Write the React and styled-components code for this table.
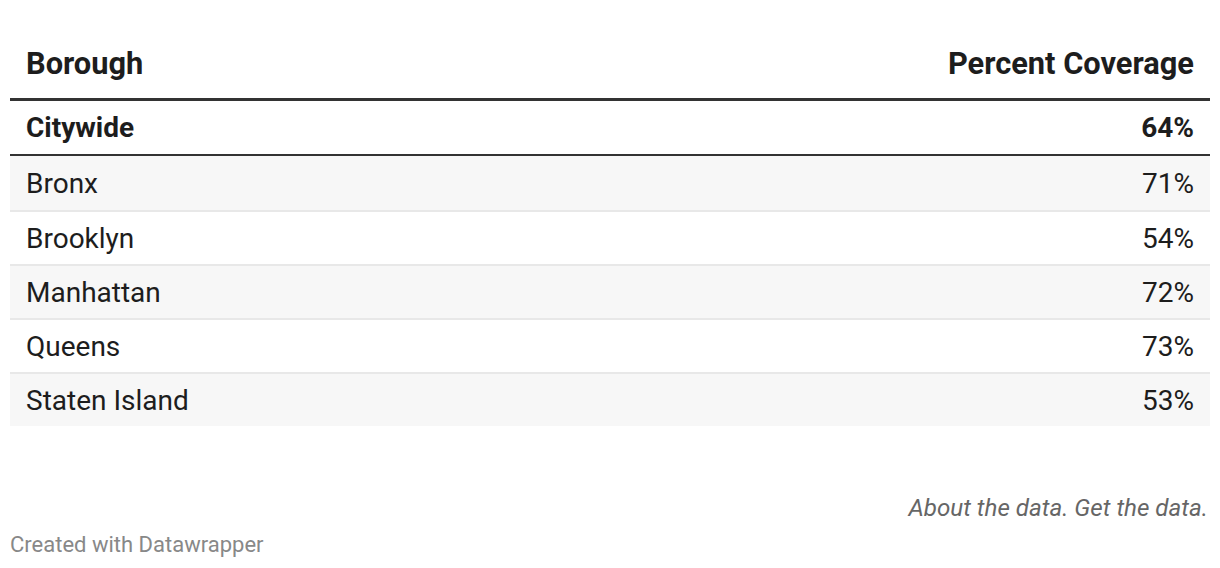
import React from 'react'
import styled, { createGlobalStyle } from 'styled-components';

const GlobalStyle = createGlobalStyle`
  html, body {
    margin: 0;
    padding: 0;
    background: #fff;
  }
  body {
    font-family: Roboto, "Liberation Sans", sans-serif;
    color: #1d1d1d;
  }
`

const rows = [
  { name: "Bronx", value: "71%" },
  { name: "Brooklyn", value: "54%" },
  { name: "Manhattan", value: "72%" },
  { name: "Queens", value: "73%" },
  { name: "Staten Island", value: "53%" },
]

const Wrapper = styled.div`
  width: 1220px;
  padding: 0 10px;
  box-sizing: border-box;
`

const Table = styled.div`
  display: flex;
  flex-direction: column;
  padding-top: 28px;
`

const Row = styled.div`
  display: flex;
  justify-content: space-between;
  align-items: center;
  padding: 0 16px;
  height: ${({ height }) => height || 52}px;
  font-size: 28px;
  font-weight: ${({ bold }) => (bold ? 700 : 400)};
  background: ${({ striped }) => (striped ? "#f7f7f7" : "#fff")};
  border-bottom: ${({ border }) => border || "none"};
`

const HeadRow = styled(Row)`
  height: 70px;
  font-size: 30.8px;
  border-bottom: 3px solid #333;
`

const Footer = styled.div`
  display: flex;
  flex-direction: column;
  padding-top: 68px;
`

const Notes = styled.div`
  align-self: flex-end;
  font-style: italic;
  font-size: 24.2px;
  color: #666;
  padding-right: 2px;
`

const Byline = styled.div`
  margin-top: 10px;
  font-size: 22px;
  color: #888;
`

export default function App() {
  return (
    <>
      <GlobalStyle />
      <Wrapper>
        <Table>
          <HeadRow bold>
            <span>Borough</span>
            <span>Percent Coverage</span>
          </HeadRow>
          <Row bold height={53} border="2px solid #333">
            <span>Citywide</span>
            <span>64%</span>
          </Row>
          {rows.map((r, i) => (
            <Row
              key={r.name}
              striped={i % 2 === 0}
              height={i === 0 ? 54 : 52}
              border={i < rows.length - 1 ? "2px solid #e8e8e8" : "none"}
            >
              <span>{r.name}</span>
              <span>{r.value}</span>
            </Row>
          ))}
        </Table>
        <Footer>
          <Notes>About the data. Get the data.</Notes>
          <Byline>Created with Datawrapper</Byline>
        </Footer>
      </Wrapper>
    </>
  )
}
